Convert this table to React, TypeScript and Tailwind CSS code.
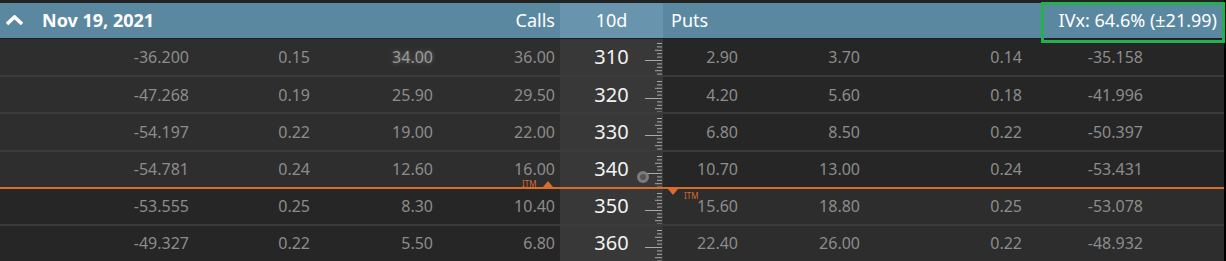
import React from 'react';

interface ChainRow {
  strike: number;
  calls: string[];
  puts: string[];
  callItm: boolean;
}

const rows: ChainRow[] = [
  { strike: 310, calls: ['-36.200', '0.15', '34.00', '36.00'], puts: ['2.90', '3.70', '0.14', '-35.158'], callItm: true },
  { strike: 320, calls: ['-47.268', '0.19', '25.90', '29.50'], puts: ['4.20', '5.60', '0.18', '-41.996'], callItm: true },
  { strike: 330, calls: ['-54.197', '0.22', '19.00', '22.00'], puts: ['6.80', '8.50', '0.22', '-50.397'], callItm: true },
  { strike: 340, calls: ['-54.781', '0.24', '12.60', '16.00'], puts: ['10.70', '13.00', '0.24', '-53.431'], callItm: true },
  { strike: 350, calls: ['-53.555', '0.25', '8.30', '10.40'], puts: ['15.60', '18.80', '0.25', '-53.078'], callItm: false },
  { strike: 360, calls: ['-49.327', '0.22', '5.50', '6.80'], puts: ['22.40', '26.00', '0.22', '-48.932'], callItm: false },
];

const callWidths = ['w-[189px]', 'w-[121px]', 'w-[123px]', 'w-[122px]'];
const putWidths = ['w-[75px]', 'w-[122px]', 'w-[162px]', 'w-[121px]'];

// little tick ruler on the right edge of the strike column
function Ruler() {
  const ticks = [];
  for (let i = 0; i < 11; i++) {
    const y = 4.5 + i * 3.4;
    let len = 5;
    if (i === 5) len = 17;
    else if (i === 2 || i === 8) len = 7;
    ticks.push(<line key={i} x1={19 - len} x2={19} y1={y} y2={y} stroke="#a8a8a8" strokeWidth="1" />);
  }
  return (
    <svg className="absolute right-0 top-0" width="20" height="38" viewBox="0 0 20 38">
      {ticks}
    </svg>
  );
}

function Row({ row, index }: { row: ChainRow; index: number }) {
  const callBg = row.callItm ? 'bg-[#2e2e2e]' : 'bg-[#262626]';
  const putBg = row.callItm ? 'bg-[#262626]' : 'bg-[#2d2d2d]';
  const isItmEdge = row.strike === 350;
  const border = index === 0 ? 'border-t border-[#1f1f1f]' : isItmEdge ? 'border-t-2 border-[#d96b2b]' : 'border-t-2 border-[#3b3b3b]';

  return (
    <div className={`relative flex h-[37.5px] ${border}`}>
      <div className={`flex h-full w-[560px] items-center ${callBg}`}>
        {row.calls.map((v, i) => (
          <div
            key={i}
            className={`${callWidths[i]} text-right text-[16px] leading-[18px] ${row.strike === 310 && i === 2 ? 'text-[#9a9a9a] [text-shadow:0_0_4px_rgba(200,200,200,0.45)]' : 'text-[#8c8c8c]'}`}
          >
            {v}
          </div>
        ))}
      </div>
      <div className="relative flex h-full w-[103px] items-center justify-center bg-[#383838]">
        <span className="text-[20px] leading-[22px] text-[#f2f2f2]">{row.strike}</span>
        <Ruler />
        {row.strike === 340 && (
          <div className="absolute left-[77px] top-[19px] h-[12px] w-[12px] rounded-full border-[3px] border-[#7c7c7c] bg-[#555]" />
        )}
      </div>
      <div className={`flex h-full flex-1 items-center ${putBg}`}>
        {row.puts.map((v, i) => (
          <div key={i} className={`${putWidths[i]} text-right text-[16px] leading-[18px] text-[#8c8c8c]`}>
            {v}
          </div>
        ))}
      </div>

      {/* ITM markers on the orange line */}
      {isItmEdge && (
        <>
          <div className="absolute left-[522px] top-[-9px] text-[8px] leading-none text-[#d96b2b]">ITM</div>
          <div className="absolute left-[543px] top-[-8px] h-0 w-0 border-x-[5px] border-b-[6px] border-x-transparent border-b-[#d96b2b]" />
          <div className="absolute left-[668px] top-[0px] h-0 w-0 border-x-[5.5px] border-t-[6px] border-x-transparent border-t-[#d96b2b]" />
          <div className="absolute left-[684px] top-[3px] text-[8px] leading-none text-[#d96b2b]">ITM</div>
        </>
      )}
    </div>
  );
}

export default function App() {
  return (
    <div
      className="relative flex h-[261px] w-[1226px] overflow-hidden bg-black"
      style={{ fontFamily: '"Noto Sans", "Open Sans", sans-serif' }}
    >
      <div className="flex w-[1224px] flex-col bg-[#222]">
        {/* Header */}
        <div className="mt-[3px] flex h-[35px] shrink-0 items-center">
          <div className="flex h-full w-[560px] items-center bg-[#5b88a1]">
            <svg className="ml-[6px]" width="17" height="11" viewBox="0 0 17 11">
              <path d="M1 9 L8.5 2 L16 9" fill="none" stroke="#fff" strokeWidth="3.6" strokeLinejoin="miter" />
            </svg>
            <span className="ml-[19px] text-[18px] font-bold text-white">Nov 19, 2021</span>
            <span className="ml-auto pr-[5px] text-[18px] text-white">Calls</span>
          </div>
          <div className="flex h-full w-[103px] items-center justify-center bg-[#6894ad]">
            <span className="text-[18px] text-white">10d</span>
          </div>
          <div className="flex h-full flex-1 items-center bg-[#5b88a1]">
            <span className="pl-[8px] text-[18px] text-white">Puts</span>
            <span className="ml-auto pr-[7px] text-[18px] text-white">IVx: 64.6% (±21.99)</span>
          </div>
        </div>

        {rows.map((row, i) => (
          <Row key={row.strike} row={row} index={i} />
        ))}
      </div>

      {/* highlight box */}
      <div className="pointer-events-none absolute left-[1041px] top-[2px] h-[41px] w-[184px] border-[3px] border-[#22b14c]" />
    </div>
  );
}
